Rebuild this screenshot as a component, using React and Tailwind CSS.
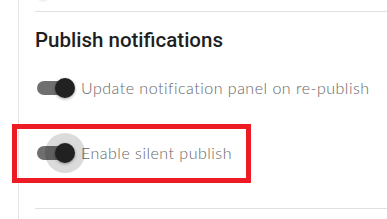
import React from "react";

function Toggle({ focused }) {
  return (
    <div className="relative w-[38px] h-[20px] flex items-center shrink-0">
      <div className="absolute left-0 w-[34px] h-[14px] rounded-full bg-[#6f6f6f]" />
      {focused && (
        <div className="absolute left-[8px] top-[-10px] w-[40px] h-[40px] rounded-full bg-[rgba(0,0,0,0.14)]" />
      )}
      <div className="absolute left-[18px] w-[20px] h-[20px] rounded-full bg-[#212121] shadow-[0_1px_3px_rgba(0,0,0,0.4)]" />
    </div>
  );
}

export default function App() {
  return (
    <div
      className="w-[387px] h-[219px] bg-white relative overflow-hidden flex"
      style={{ fontFamily: "Lato, 'Open Sans', sans-serif" }}
    >
      <div className="w-[18px] shrink-0" />
      <div className="w-px bg-[#e4e4e4] h-full shrink-0" />
      <div className="ml-4 flex-1 flex flex-col relative">
        <div className="absolute left-[1px] top-[-12px] w-[14px] h-[14px] rounded-full bg-[#f2f2f2]" />
        <div className="h-[11px]" />
        <div className="h-px bg-[#e0e0e0]" />
        <h2
          className="mt-4 text-[20.5px] leading-[24px] font-medium text-[#1f1f1f]"
          style={{ fontFamily: "Roboto, sans-serif" }}
        >
          Publish notifications
        </h2>
        <div className="mt-4 h-10 flex items-center gap-[6px] pl-[2px]">
          <Toggle />
          <span className="text-[16px] font-light text-[#666666] tracking-[0.5px]">
            Update notification panel on re-publish
          </span>
        </div>
        <div className="mt-[25px] h-10 flex items-center gap-[6px] pl-[2px]">
          <Toggle focused />
          <span className="text-[16px] font-light text-[#666666] tracking-[0.5px]">
            Enable silent publish
          </span>
        </div>
        <div className="mt-[35px] h-px bg-[#e0e0e0]" />
      </div>
      <div className="absolute left-[12px] top-[124px] w-[239px] h-[59px] border-[5px] border-[#ed1c24]" />
    </div>
  );
}
